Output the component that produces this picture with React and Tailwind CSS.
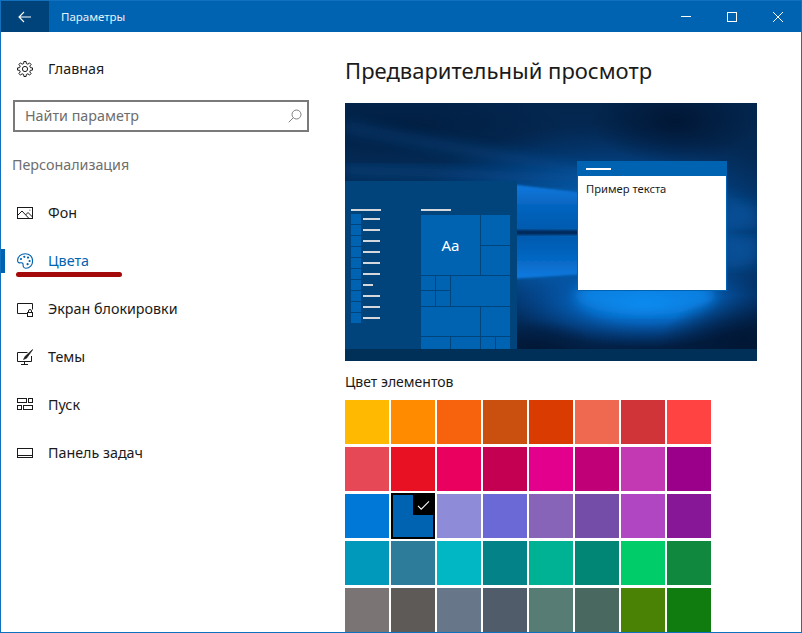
import React from "react";

const colors = [
  "#FFB900","#FF8C00","#F7630C","#CA5010","#DA3B01","#EF6950","#D13438","#FF4343",
  "#E74856","#E81123","#EA005E","#C30052","#E3008C","#BF0077","#C239B3","#9A0089",
  "#0078D7","#0063B1","#8E8CD8","#6B69D6","#8764B8","#744DA9","#B146C2","#881798",
  "#0099BC","#2D7D9A","#00B7C3","#038387","#00B294","#018574","#00CC6A","#10893E",
  "#7A7574","#5D5A58","#68768A","#515C6B","#567C73","#486860","#498205","#107C10",
];

function gearPath() {
  const n = 8, pts = [];
  for (let i = 0; i < n; i++) {
    const a = (i * 2 * Math.PI) / n - Math.PI / 2;
    const w = Math.PI / n;
    [[5.6, -w * 0.62], [7.6, -w * 0.36], [7.6, w * 0.36], [5.6, w * 0.62]].forEach(([r, d]) => {
      pts.push(`${(8 + r * Math.cos(a + d)).toFixed(2)} ${(8 + r * Math.sin(a + d)).toFixed(2)}`);
    });
  }
  return "M" + pts.join("L") + "Z";
}

const Svg = ({ children, className = "" }) => (
  <svg viewBox="0 0 16 16" fill="none" stroke="currentColor" strokeWidth="1" className={`w-4 h-4 shrink-0 ${className}`}>{children}</svg>
);

const icons = {
  home: <Svg><path d={gearPath()} /><circle cx="8" cy="8" r="2.6" /></Svg>,
  bg: <Svg><rect x="0.5" y="2.5" width="15" height="11" /><path d="M0.5 10.5L5 6l7 7.5M8.5 10l2.5-2.5 4.5 4.5" /><path d="M12.5 5.2h.8" /></Svg>,
  colors: <Svg><path d="M8.2 0.7C4 .7.6 3.6.6 7.4c0 2 1.5 2.7 2.9 2.4 1.5-.3 2.7.3 2.6 1.9-.1 1.5.4 3.5 2.7 3.5 4 0 6.8-3.4 6.8-7.2C15.6 3.6 12.4.7 8.2.7z" strokeWidth="1.1" /><g fill="currentColor" stroke="none"><circle cx="4" cy="6" r="1.1" /><circle cx="7.3" cy="3.8" r="1.1" /><circle cx="11" cy="4.6" r="1.1" /><circle cx="12.6" cy="8" r="1.1" /><circle cx="10.6" cy="11.2" r="1.1" /></g></Svg>,
  lock: <Svg><path d="M10 12.5H.5v-10h15v6" /><rect x="10.5" y="11.5" width="5" height="4" /><path d="M11.5 11.5V10a1.5 1.5 0 0 1 3 0v1.5" /></Svg>,
  themes: <Svg><path d="M10.5 3.5H.5v9h14V7" /><path d="M7.5 12.5v2.5M4 15.5h7" /><path d="M15.5 .5L8 7.5l-1.5 3 3-1.2L15.5 1z" fill="currentColor" strokeWidth=".6" /></Svg>,
  start: <Svg><rect x="0.5" y="1.5" width="9" height="4" /><rect x="11.5" y="1.5" width="4" height="4" /><rect x="0.5" y="8.5" width="4" height="4" /><rect x="6.5" y="8.5" width="9" height="4" /></Svg>,
  taskbar: <Svg><rect x="0.5" y="3.5" width="15" height="9" /><path d="M0.5 10.5h15" /></Svg>,
};

const nav = [
  ["bg", "Фон"],
  ["colors", "Цвета", true],
  ["lock", "Экран блокировки"],
  ["themes", "Темы"],
  ["start", "Пуск"],
  ["taskbar", "Панель задач"],
];

const NavRow = ({ icon, label, active }) => (
  <div className={`relative flex items-center h-12 pl-4 gap-[15px] text-[14.3px] ${active ? "text-[#0063B1]" : "text-[#1a1a1a]"}`}>
    {active && <span className="absolute left-0 top-3 w-1 h-6 bg-[#0063B1]" />}
    {icons[icon]}
    <span>{label}</span>
    {active && <span className="absolute left-[15px] top-[35px] w-[106px] h-[5px] rounded-full bg-[#a40a0a]" />}
  </div>
);

const Wallpaper = () => (
  <svg viewBox="0 0 412 258" preserveAspectRatio="none" className="absolute inset-0 w-full h-full">
    <defs>
      <linearGradient id="base" x1="0" y1="0" x2="0" y2="1">
        <stop offset="0" stopColor="#03264e" />
        <stop offset="0.55" stopColor="#03305f" />
        <stop offset="1" stopColor="#021c3e" />
      </linearGradient>
      <radialGradient id="glow" cx="0.5" cy="0.5" r="0.5">
        <stop offset="0" stopColor="#0a86ec" />
        <stop offset="0.45" stopColor="#0668c4" stopOpacity="0.9" />
        <stop offset="1" stopColor="#03408a" stopOpacity="0" />
      </radialGradient>
      <radialGradient id="dark" cx="0.5" cy="0.5" r="0.5">
        <stop offset="0" stopColor="#011634" stopOpacity="0.95" />
        <stop offset="1" stopColor="#011634" stopOpacity="0" />
      </radialGradient>
      <linearGradient id="paneTop" x1="0" y1="0" x2="0" y2="1">
        <stop offset="0" stopColor="#0c7ae0" />
        <stop offset="0.5" stopColor="#0664bf" />
        <stop offset="1" stopColor="#055aae" />
      </linearGradient>
      <linearGradient id="paneBottom" x1="0" y1="0" x2="0" y2="1">
        <stop offset="0" stopColor="#055aae" />
        <stop offset="0.55" stopColor="#0668c4" />
        <stop offset="1" stopColor="#0c7ce2" />
      </linearGradient>
      <filter id="b6"><feGaussianBlur stdDeviation="6" /></filter>
      <filter id="b1"><feGaussianBlur stdDeviation="0.8" /></filter>
    </defs>
    <rect width="412" height="258" fill="url(#base)" />
    <ellipse cx="260" cy="135" rx="215" ry="115" fill="url(#glow)" opacity="0.75" />
    <ellipse cx="300" cy="200" rx="135" ry="44" fill="url(#glow)" />
    <ellipse cx="300" cy="192" rx="70" ry="20" fill="#0a8cf0" opacity="0.7" filter="url(#b6)" />
    <ellipse cx="330" cy="18" rx="85" ry="42" fill="url(#dark)" />
    <ellipse cx="60" cy="25" rx="160" ry="38" fill="url(#dark)" opacity="0.55" />
    <ellipse cx="400" cy="240" rx="85" ry="48" fill="url(#dark)" />
    <ellipse cx="190" cy="245" rx="60" ry="28" fill="url(#dark)" opacity="0.8" />
    <path d="M0 18L380 90L412 100L412 106L300 84L0 30Z" fill="#0a5fae" opacity="0.28" filter="url(#b6)" />
    <path d="M0 62L300 72L240 80L0 72Z" fill="#0a5fae" opacity="0.35" filter="url(#b6)" />
    <path d="M382 98L412 104V124L382 124Z" fill="#0a5fae" opacity="0.45" filter="url(#b6)" />
    <path d="M382 135L412 135V160L382 166Z" fill="#0a5fae" opacity="0.45" filter="url(#b6)" />
    <path d="M165 81L240 90V126H165Z" fill="url(#paneTop)" filter="url(#b1)" />
    <path d="M165 133H240V171L165 176Z" fill="url(#paneBottom)" filter="url(#b1)" />
    <path d="M165 127H240V132H165Z" fill="#012a5c" filter="url(#b1)" />
  </svg>
);

const Tile = ({ className = "", children }) => (
  <div className={`bg-[#0063B1] flex items-center justify-center ${className}`}>{children}</div>
);

const MiniStart = () => (
  <div className="absolute left-0 top-[78px] w-[172px] h-[168px] bg-[#00447b] flex pt-[28px] pl-[6px] overflow-hidden">
    <div className="w-[70px] shrink-0">
      <div className="w-[30px] h-[2px] bg-[#d4d8dc]" />
      <div className="mt-[3px] flex flex-col gap-px">
        {[17, 17, 17, 17, 17, 17, 10, 17, 17, 17].map((w, i) => (
          <div key={i} className="flex items-center gap-[2px]">
            <div className="w-[10px] h-[10px] bg-[#0063B1]" />
            <div className="h-[2px] bg-[#d4d8dc]" style={{ width: w }} />
          </div>
        ))}
      </div>
    </div>
    <div className="w-[89px] shrink-0">
      <div className="w-[30px] h-[2px] bg-[#d4d8dc]" />
      <div className="mt-[4px] grid grid-cols-6 auto-rows-[14.25px] gap-px">
        <Tile className="col-span-4 row-span-4 text-white text-[15px]">Aa</Tile>
        <Tile className="col-span-2 row-span-2" />
        <Tile className="col-span-2 row-span-2" />
        <Tile />
        <Tile />
        <Tile className="col-span-4 row-span-2" />
        <Tile />
        <Tile />
        <Tile className="col-span-4 row-span-2" />
        <Tile className="col-span-2 row-span-2" />
        <Tile className="col-span-2" />
        <Tile className="col-span-2" />
        <Tile />
        <Tile />
      </div>
    </div>
  </div>
);

const MiniWindow = () => (
  <div className="absolute left-[232px] top-[58px] w-[150px] h-[130px] flex flex-col border border-t-0 border-[#0063B1] bg-white">
    <div className="h-[15px] -mx-px bg-[#0063B1] flex items-center pl-[9px] shrink-0">
      <div className="w-[25px] h-[2px] bg-white" />
    </div>
    <div className="pl-[8px] pt-[5px] text-[11.2px] leading-[16px] text-[#1a1a1a]">Пример текста</div>
  </div>
);

export default function App() {
  return (
    <div className="w-[802px] h-[633px] flex flex-col border border-[#1271bf] overflow-hidden bg-white font-['Open_Sans',sans-serif]">
      <header className="h-[31px] shrink-0 bg-[#0063B1] flex items-center text-white">
        <button className="w-12 h-full bg-[#00437a] flex items-center justify-center">
          <svg viewBox="0 0 14 12" className="w-[14px] h-3" fill="none" stroke="white" strokeWidth="1.1"><path d="M13 6H1M6 1L1 6l5 5" /></svg>
        </button>
        <span className="ml-3 text-[11.5px] text-[#e8f1f8]">Параметры</span>
        <div className="ml-auto flex h-full">
          <div className="w-[46px] flex items-center justify-center">
            <span className="w-[10px] h-px bg-white" />
          </div>
          <div className="w-[46px] flex items-center justify-center">
            <span className="w-[10px] h-[10px] border border-white" />
          </div>
          <div className="w-[46px] flex items-center justify-center">
            <svg viewBox="0 0 10 10" className="w-[10px] h-[10px]" stroke="white" strokeWidth="1"><path d="M0 0L10 10M10 0L0 10" /></svg>
          </div>
        </div>
      </header>
      <div className="flex flex-1 min-h-0">
        <aside className="w-[344px] shrink-0">
          <div className="mt-[13px] flex items-center h-12 pl-4 gap-[15px] text-[14.3px] text-[#1a1a1a]">
            {icons.home}
            <span>Главная</span>
          </div>
          <div className="mt-[7px] ml-3 w-[296px] h-8 border-2 border-[#7a7a7a] flex items-center pl-[10px] pr-[5px] text-[14.3px] text-[#6d6d6d]">
            <span>Найти параметр</span>
            <svg viewBox="0 0 14 14" className="ml-auto w-[14px] h-[14px]" fill="none" stroke="#808080" strokeWidth="1"><circle cx="8.5" cy="5.5" r="4.5" /><path d="M5.3 8.7L.7 13.3" /></svg>
          </div>
          <div className="mt-5 mb-[11px] ml-[11px] h-[26px] flex items-center text-[14.3px] text-[#6e6e6e]">Персонализация</div>
          {nav.map(([icon, label, active]) => (
            <NavRow key={label} icon={icon} label={label} active={active} />
          ))}
        </aside>
        <main className="flex-1 min-w-0 overflow-hidden">
          <h1 className="mt-[20px] h-9 flex items-center text-[22px] font-normal text-[#1a1a1a]">Предварительный просмотр</h1>
          <div className="relative mt-[15px] w-[412px] h-[258px] overflow-hidden flex flex-col justify-end">
            <Wallpaper />
            <MiniStart />
            <MiniWindow />
            <div className="relative h-3 bg-[#002f57]" />
          </div>
          <div className="mt-[10px] h-[20px] flex items-center text-[14px] text-[#1a1a1a]">Цвет элементов</div>
          <div className="mt-[9px] grid grid-cols-[repeat(8,44px)] auto-rows-[44px] gap-x-[2px] gap-y-[3px]">
            {colors.map((c, i) =>
              i === 17 ? (
                <div key={c} className="relative -mt-px -mb-px h-[46px] bg-black border-2 border-black">
                  <div className="w-full h-full" style={{ background: c }} />
                  <div className="absolute right-0 top-0 w-5 h-5 bg-black flex items-center justify-center">
                    <svg viewBox="0 0 14 12" className="w-[13px] h-[11px]" fill="none" stroke="white" strokeWidth="1.1"><path d="M1 6.5L4.5 10L13 1.5" /></svg>
                  </div>
                </div>
              ) : (
                <div key={c} style={{ background: c }} />
              )
            )}
          </div>
        </main>
      </div>
    </div>
  );
}
